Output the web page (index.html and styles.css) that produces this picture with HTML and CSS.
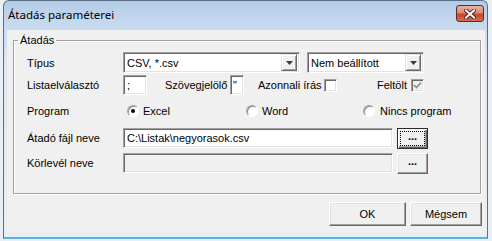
FILE: index.html
```html
<!DOCTYPE html>
<html lang="hu">
<head>
  <meta charset="UTF-8">
  <title>Átadás paraméterei</title>
  <link rel="stylesheet" href="styles.css">
</head>
<body>

  <div class="window">

    <div class="titlebar">
      <span class="title">Átadás paraméterei</span>
      <div class="close">
        <svg width="12" height="10" viewBox="0 0 12 10">
          <path d="M2 1.5 L10 8.5 M10 1.5 L2 8.5" stroke="#4a2018" stroke-width="3.8" stroke-linecap="square"/>
          <path d="M2 1.5 L10 8.5 M10 1.5 L2 8.5" stroke="#fff" stroke-width="2" stroke-linecap="square"/>
        </svg>
      </div>
    </div>

    <div class="client">

      <fieldset class="group">
        <legend>Átadás</legend>

        <!-- Típus -->
        <div class="row row-type">
          <span class="lbl">Típus</span>
          <div class="combo combo-type">
            <span class="val">CSV, *.csv</span>
            <span class="drop"><svg width="7" height="4" viewBox="0 0 7 4"><path d="M0 0 H7 L3.5 4 Z" fill="#3c3c3c"/></svg></span>
          </div>
          <div class="combo combo-mode">
            <span class="val">Nem beállított</span>
            <span class="drop"><svg width="7" height="4" viewBox="0 0 7 4"><path d="M0 0 H7 L3.5 4 Z" fill="#3c3c3c"/></svg></span>
          </div>
        </div>

        <!-- elválasztók, jelölők -->
        <div class="row row-sep">
          <span class="lbl">Listaelválasztó</span>
          <div class="edit edit-sep">;</div>
          <span class="txt txt-quote">Szövegjelölő</span>
          <div class="edit edit-quote">"</div>
          <span class="txt txt-now">Azonnali írás</span>
          <span class="check"></span>
          <span class="txt txt-fill">Feltölt</span>
          <span class="check checked">
            <svg width="9" height="9" viewBox="0 0 9 9"><path d="M1 4 L3.5 6.5 L8 1.5" fill="none" stroke="#8c8c8c" stroke-width="1.6"/></svg>
          </span>
        </div>

        <!-- Program -->
        <div class="row row-prog">
          <span class="lbl">Program</span>
          <span class="radio on"></span>
          <span class="opt opt-excel">Excel</span>
          <span class="radio"></span>
          <span class="opt opt-word">Word</span>
          <span class="radio"></span>
          <span class="opt">Nincs program</span>
        </div>

        <!-- fájlok -->
        <div class="row row-file">
          <span class="lbl">Átadó fájl neve</span>
          <div class="edit edit-path">C:\Listak\negyorasok.csv</div>
          <div class="browse focused"><span class="focus">...</span></div>
        </div>

        <div class="row row-merge">
          <span class="lbl">Körlevél neve</span>
          <div class="edit edit-path disabled"></div>
          <div class="browse">...</div>
        </div>
      </fieldset>

      <div class="buttons">
        <div class="btn btn-ok">OK</div>
        <div class="btn btn-cancel">Mégsem</div>
      </div>

    </div>
  </div>

</body>
</html>
```

FILE: styles.css
```css
body {
  margin: 0;
  background-color: #e9eff5;
  font-family: "Liberation Sans", Arial, sans-serif;
  font-size: 11px;
  color: #000;
}

.window {
  box-sizing: border-box;
  width: 485px;
  height: 239px;
  margin-left: 3px;
  border: 1px solid #5b6f87;
  border-bottom: 2px solid #5fb1d8;
  border-radius: 6px 6px 0 0;
  background: linear-gradient(#b3cbe6 0, #c4d8ee 20px, #dbe7f3 60px, #e8eff6 100%);
}

.titlebar {
  height: 29px;
  display: flex;
  align-items: flex-start;
  justify-content: space-between;
  padding: 0 3px 0 4px;
}

.title {
  font-family: "Noto Sans", "DejaVu Sans", sans-serif;
  font-size: 11.5px;
  line-height: 28px;
}

.close {
  box-sizing: border-box;
  width: 28px;
  height: 17px;
  margin-top: 4px;
  border: 1px solid #5e2b22;
  border-radius: 3px;
  background: linear-gradient(#eab3a5 0, #d98a74 45%, #c8452c 55%, #d56a4f 100%);
  display: flex;
  align-items: center;
  justify-content: center;
}

.client {
  height: 203px;
  margin: 0 2px 0 3px;
  background-color: #f0f0f0;
  display: flex;
  flex-direction: column;
}

/* group box */
.group {
  margin: 4px 4px 0 6px;
  padding: 5px 0 20px 0;
  border: 1px solid #a0a0a0;
  box-shadow: inset 1px 1px #fff, 1px 1px #fff;
}

.group legend {
  margin-left: 4px;
  padding: 0 2px;
  line-height: 13px;
}

.row {
  display: flex;
  align-items: center;
  padding-left: 13px;
  height: 20px;
}

.row-type { height: 21px; }
.row-sep { margin-top: 2px; }
.row-prog { margin-top: 6px; }
.row-file { margin-top: 7px; }
.row-merge { margin-top: 5px; }

.lbl {
  width: 96px;
  flex: none;
}

/* sunken fields */
.edit,
.combo {
  box-sizing: border-box;
  height: 20px;
  border: 1px solid;
  border-color: #a0a0a0 #fff #fff #a0a0a0;
  box-shadow: inset 1px 1px #696969, inset -1px -1px #e3e3e3;
  background-color: #fff;
  padding: 0 3px;
  line-height: 18px;
  white-space: nowrap;
  overflow: hidden;
}

.combo {
  height: 21px;
  display: flex;
  align-items: center;
  justify-content: space-between;
  padding: 2px 2px 2px 3px;
}

.combo-type { width: 177px; }
.combo-mode { width: 117px; margin-left: 7px; }

.drop {
  box-sizing: border-box;
  width: 16px;
  height: 17px;
  border: 1px solid;
  border-color: #e3e3e3 #696969 #696969 #e3e3e3;
  box-shadow: inset 1px 1px #fff, inset -1px -1px #a0a0a0;
  background-color: #f0f0f0;
  display: flex;
  align-items: center;
  justify-content: center;
}

.edit-sep { width: 24px; }
.edit-quote { width: 14px; padding: 0 2px; }
.edit-path { width: 270px; }
.edit.disabled { background-color: #f0f0f0; }

.txt { flex: none; }
.txt-quote { width: 65px; margin-left: 18px; }
.txt-now { width: 66px; margin-left: 14px; }
.txt-fill { width: 34px; margin-left: 40px; }

.check {
  box-sizing: border-box;
  width: 13px;
  height: 13px;
  border: 1px solid;
  border-color: #a0a0a0 #fff #fff #a0a0a0;
  box-shadow: inset 1px 1px #696969, inset -1px -1px #e3e3e3;
  background-color: #fff;
  display: flex;
  align-items: center;
  justify-content: center;
}

.check.checked { background-color: #f0f0f0; }

/* radio buttons */
.radio {
  box-sizing: border-box;
  width: 12px;
  height: 12px;
  margin-left: 4px;
  border-radius: 50%;
  border: 1px solid;
  border-color: #a0a0a0 #fff #fff #a0a0a0;
  box-shadow: inset 1px 1px #909090;
  background-color: #fff;
  position: relative;
}

.radio.on::after {
  content: "";
  position: absolute;
  left: 3px;
  top: 3px;
  width: 4px;
  height: 4px;
  border-radius: 50%;
  background-color: #000;
}

.opt { margin-left: 4px; }
.opt-excel { width: 103px; }
.opt-word { width: 101px; }
.opt + .radio { margin-left: 0; }
.opt-word + .radio + .opt { margin-left: 5px; }

/* push buttons */
.browse,
.btn {
  box-sizing: border-box;
  border: 1px solid;
  border-color: #fff #696969 #696969 #fff;
  box-shadow: inset -1px -1px #a0a0a0, inset 1px 1px #e3e3e3;
  background-color: #f0f0f0;
  display: flex;
  align-items: center;
  justify-content: center;
}

.browse {
  width: 31px;
  height: 21px;
  margin-left: 4px;
  font-weight: bold;
  line-height: 10px;
  padding-bottom: 4px;
}

.browse.focused {
  border: 1px solid #2b2b2b;
  box-shadow: inset 1px 1px #fff, inset -1px -1px #696969, inset -2px -2px #a0a0a0;
  padding: 3px;
}

.focus {
  flex: 1;
  align-self: stretch;
  outline: 1px dotted #000;
  text-align: center;
  line-height: 8px;
}

.buttons {
  display: flex;
  justify-content: flex-end;
  gap: 4px;
  margin-top: 8px;
  padding-right: 3px;
}

.btn {
  height: 24px;
}

.btn-ok { width: 77px; }
.btn-cancel { width: 72px; }
```
